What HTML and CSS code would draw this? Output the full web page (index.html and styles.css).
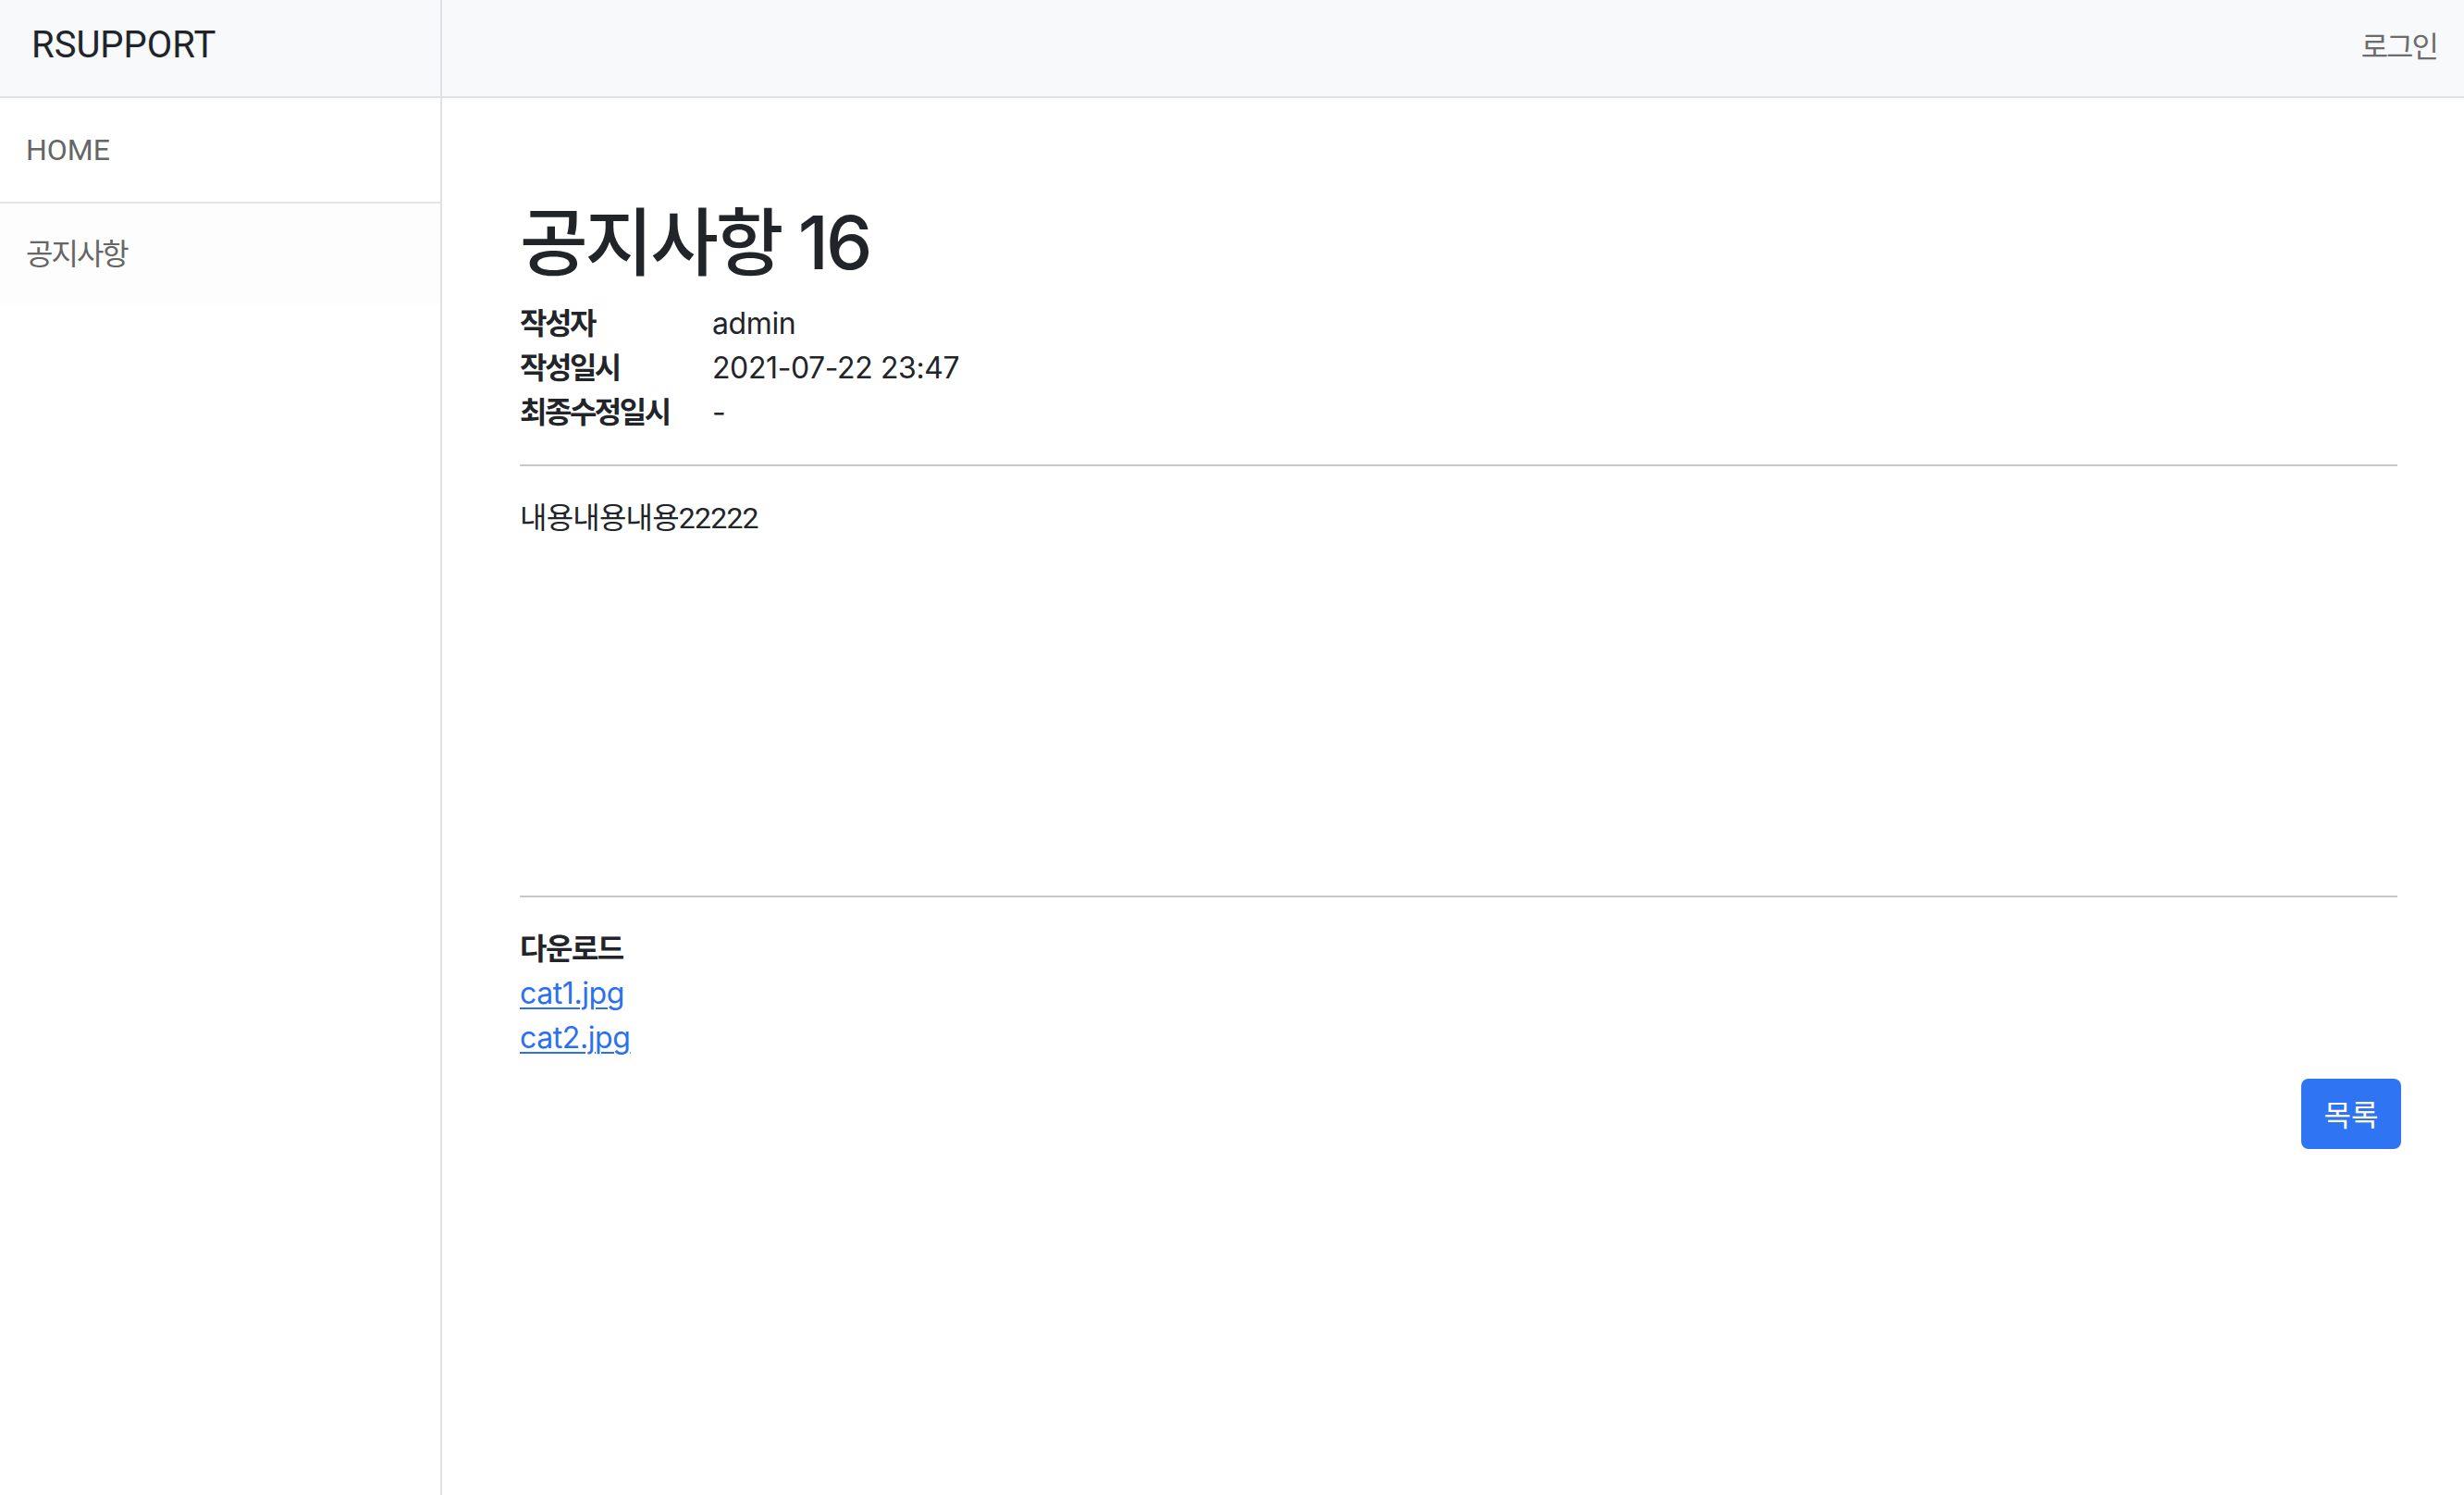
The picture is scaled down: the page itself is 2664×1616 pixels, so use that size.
FILE: index.html
```html
<!DOCTYPE html>
<html lang="ko">
<head>
<meta charset="utf-8">
<title>RSUPPORT - 공지사항</title>
<link rel="stylesheet" href="styles.css">
</head>
<body>
<div class="app">
  <aside class="sidebar">
    <div class="brand">RSUPPORT</div>
    <nav class="nav">
      <a class="nav-item" href="#">HOME</a>
      <a class="nav-item nav-item-active nav-ko" href="#">공지사항</a>
    </nav>
  </aside>
  <div class="main">
    <header class="topbar">
      <a class="login" href="#">로그인</a>
    </header>
    <main class="content">
      <h1 class="title">공지사항 16</h1>
      <dl class="meta">
        <dt>작성자</dt><dd>admin</dd>
        <dt>작성일시</dt><dd>2021-07-22 23:47</dd>
        <dt>최종수정일시</dt><dd>-</dd>
      </dl>
      <hr class="rule">
      <div class="body-text">내용내용내용22222</div>
      <hr class="rule">
      <div class="downloads">
        <div class="downloads-title">다운로드</div>
        <a class="file-link" href="#">cat1.jpg</a>
        <a class="file-link" href="#">cat2.jpg</a>
      </div>
      <div class="actions">
        <a class="btn-primary" href="#">목록</a>
      </div>
    </main>
  </div>
</div>
</body>
</html>
```
FILE: styles.css
```css
html, body {
  margin: 0;
  padding: 0;
  background: #ffffff;
}
body {
  font-family: "Inter", "Noto Sans CJK KR", sans-serif;
  color: #212529;
  font-size: 32px;
  line-height: 1.5;
}
a { text-decoration: none; }

.app {
  display: flex;
  min-height: 100vh;
}

.sidebar {
  width: 476px;
  flex: 0 0 476px;
  border-right: 2px solid #dee2e6;
  display: flex;
  flex-direction: column;
}
.brand {
  height: 106px;
  box-sizing: border-box;
  background: #f8f9fa;
  border-bottom: 2px solid #dee2e6;
  display: flex;
  align-items: center;
  padding: 0 0 6px 34px;
  font-family: "Roboto", "Noto Sans CJK KR", sans-serif;
  font-size: 40px;
  color: #212529;
}
.nav {
  display: flex;
  flex-direction: column;
}
.nav-item {
  display: flex;
  align-items: center;
  height: 112px;
  padding-left: 28px;
  font-family: "Roboto", "Noto Sans CJK KR", sans-serif;
  font-size: 32px;
  color: #666666;
  border-bottom: 2px solid #e3e5e8;
}
.nav-ko {
  letter-spacing: -2px;
}
.nav-item-active {
  height: 110px;
  background: #fdfdfd;
  border-bottom: none;
}

.main {
  flex: 1;
  display: flex;
  flex-direction: column;
  min-width: 0;
}
.topbar {
  height: 106px;
  box-sizing: border-box;
  background: #f8f9fa;
  border-bottom: 2px solid #dee2e6;
  display: flex;
  justify-content: flex-end;
  align-items: center;
  padding: 0 29px 8px 0;
}
.login {
  font-family: "Noto Sans CJK KR", sans-serif;
  font-size: 32px;
  letter-spacing: -2px;
  color: #6c6c6c;
}

.content {
  margin: 0 72px 0 84px;
  padding-top: 108px;
}
.title {
  margin: 0 0 16px;
  font-size: 80px;
  font-weight: 500;
  line-height: 1.2;
  letter-spacing: -3px;
}
.meta {
  display: grid;
  grid-template-columns: 208px 1fr;
  margin: 0;
}
.meta dt {
  font-weight: 700;
  font-size: 32px;
  letter-spacing: -2.5px;
}
.meta dd {
  margin: 0;
  font-size: 32px;
  letter-spacing: -0.4px;
}
.rule {
  border: 0;
  border-top: 2px solid #c8c8c8;
  margin: 32px 0;
}
.body-text {
  font-family: "Roboto", "Noto Sans CJK KR", sans-serif;
  letter-spacing: -0.8px;
  min-height: 400px;
}
.downloads {
  display: flex;
  flex-direction: column;
  align-items: flex-start;
}
.downloads-title {
  font-weight: 700;
  letter-spacing: -1.5px;
}
.file-link {
  color: #2b70f0;
  letter-spacing: -0.4px;
  text-decoration: underline;
  text-underline-offset: 4px;
  text-decoration-thickness: 2px;
}
.actions {
  display: flex;
  justify-content: flex-end;
  margin: 20px -4px 0 0;
}
.btn-primary {
  display: flex;
  align-items: center;
  justify-content: center;
  width: 108px;
  height: 76px;
  box-sizing: border-box;
  background: #2f74f2;
  color: #ffffff;
  border-radius: 8px;
  font-family: "Noto Sans CJK KR", sans-serif;
  font-size: 32px;
  padding-bottom: 2px;
}
```
